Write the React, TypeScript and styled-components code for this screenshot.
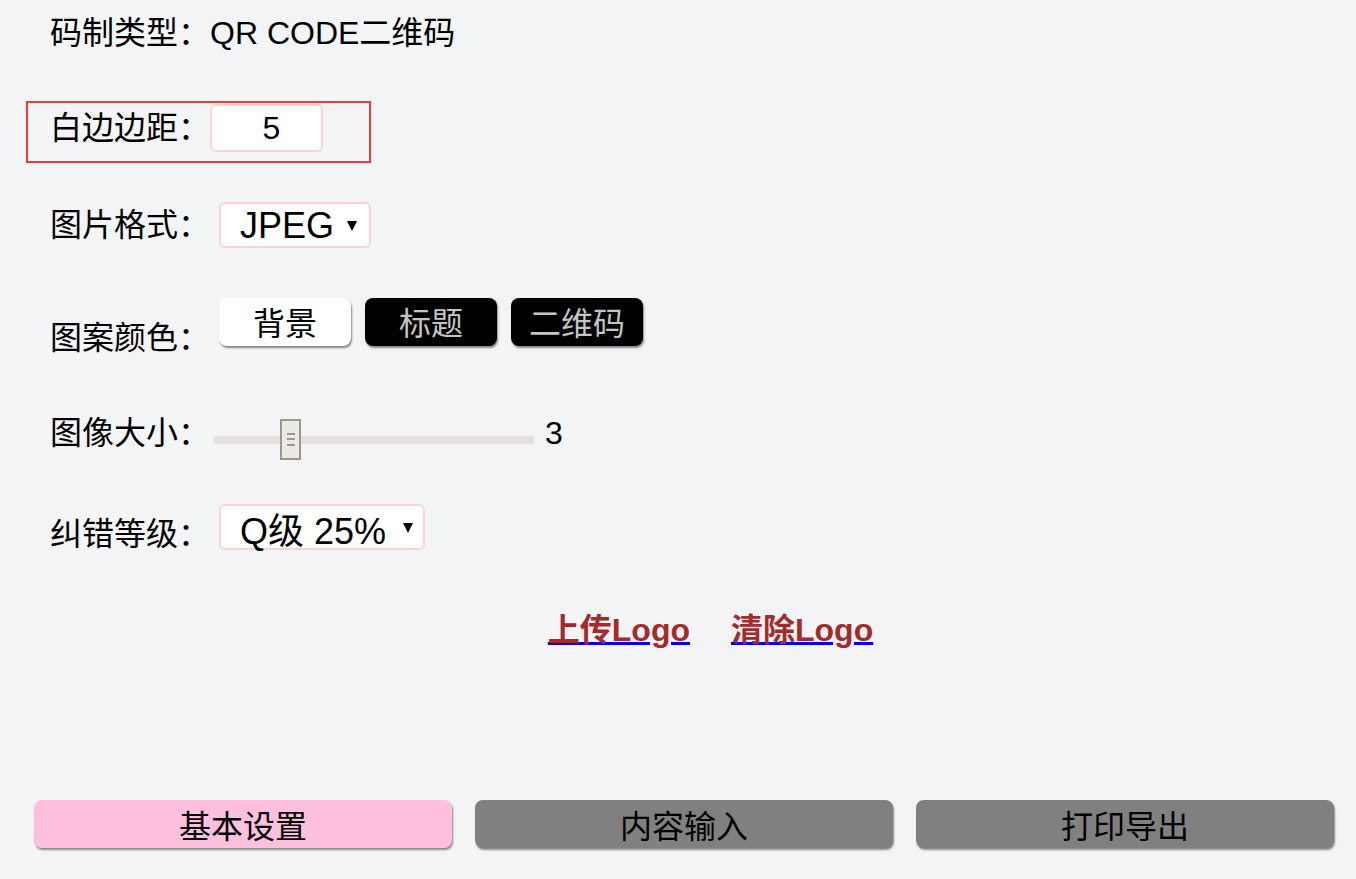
import React from 'react'
import styled, { createGlobalStyle } from 'styled-components'

const GlobalStyle = createGlobalStyle`
  body {
    margin: 0;
    background: #f3f4f6;
    font-family: 'Liberation Sans', 'Noto Sans CJK SC', sans-serif;
    color: #000;
  }
`

const Page = styled.div`
  min-height: 100vh;
  display: flex;
  flex-direction: column;
`

const Form = styled.div`
  display: flex;
  flex-direction: column;
  align-items: flex-start;
  padding-left: 26px;
`

const Row = styled.div<{ $mt: number; $h: number; $hl?: boolean }>`
  display: flex;
  align-items: flex-start;
  box-sizing: border-box;
  margin-top: ${(p) => p.$mt}px;
  height: ${(p) => p.$h}px;
  padding: 0 46px 0 22px;
  border: 2px solid ${(p) => (p.$hl ? '#f03a3a' : 'transparent')};
`

const Label = styled.span<{ $mt?: number }>`
  font-size: 32px;
  line-height: 42px;
  white-space: nowrap;
  margin-top: ${(p) => p.$mt ?? 0}px;
`

const NumberInput = styled.input`
  box-sizing: border-box;
  width: 113px;
  height: 48px;
  margin-top: 1px;
  padding: 0 0 0 10px;
  border: 2px solid #ffd2d2;
  border-radius: 6px;
  background: #fff;
  font-family: inherit;
  font-size: 32px;
  text-align: center;
  outline: none;
`

const SelectBox = styled.label<{ $w: number; $pr: number }>`
  box-sizing: border-box;
  display: flex;
  align-items: center;
  width: ${(p) => p.$w}px;
  height: 46px;
  margin-left: 9px;
  padding: 0 ${(p) => p.$pr}px 0 19px;
  border: 2px solid #ffd2d2;
  border-radius: 6px;
  background: #fff;
`

const Select = styled.select<{ $drop?: number }>`
  appearance: none;
  flex: 1;
  min-width: 0;
  border: none;
  background: transparent;
  font-family: inherit;
  font-size: 36px;
  color: #000;
  padding: ${(p) => p.$drop ?? 0}px 0 0;
  outline: none;
`

const Arrow = styled.span`
  width: 0;
  height: 0;
  border-left: 5px solid transparent;
  border-right: 5px solid transparent;
  border-top: 10px solid #000;
  margin-top: 2px;
`

const Swatches = styled.div`
  display: flex;
  gap: 14px;
  margin-left: 9px;
`

const Swatch = styled.button<{ $dark?: boolean }>`
  box-sizing: border-box;
  width: 132px;
  height: 48px;
  border: none;
  border-radius: 8px;
  background: ${(p) => (p.$dark ? '#000' : '#fff')};
  color: ${(p) => (p.$dark ? '#c4c4c4' : '#000')};
  font-family: inherit;
  font-size: 32px;
  line-height: 44px;
  padding: 4px 0 0;
  box-shadow: 1px 2px 2px rgba(0, 0, 0, 0.45);
  cursor: pointer;
`

const Range = styled.input`
  appearance: none;
  width: 320px;
  height: 41px;
  margin: 7px 0 0 4px;
  background: transparent;

  &::-webkit-slider-runnable-track {
    height: 8px;
    background: #e3dfda;
  }

  &::-webkit-slider-thumb {
    appearance: none;
    box-sizing: border-box;
    width: 21px;
    height: 41px;
    margin-top: -16.5px;
    border: 2px solid #9d968f;
    background:
      linear-gradient(#9d968f, #9d968f) 5px 12px / 8px 2px no-repeat,
      linear-gradient(#9d968f, #9d968f) 5px 17px / 8px 2px no-repeat,
      linear-gradient(#9d968f, #9d968f) 5px 23px / 8px 2px no-repeat,
      #ece9e5;
  }
`

const RangeValue = styled.span`
  font-size: 32px;
  line-height: 42px;
  margin-left: 11px;
`

const LinkBar = styled.div`
  display: flex;
  justify-content: center;
  gap: 41px;
  margin-top: 52px;
  padding-left: 65px;
`

const LogoLink = styled.a`
  color: #0000ee;
  text-decoration: underline;
  text-decoration-thickness: 3px;
  text-underline-offset: 1px;
  font-size: 32px;
  line-height: 42px;
  font-weight: bold;
  cursor: pointer;
`

const LinkText = styled.span`
  color: #a52a2a;
`

const Nav = styled.div`
  margin-top: auto;
  display: grid;
  grid-template-columns: repeat(3, 1fr);
  gap: 23px;
  padding: 0 22px 31px 34px;
`

const Tab = styled.button<{ $active?: boolean }>`
  height: 48px;
  border: none;
  border-radius: 8px;
  background: ${(p) => (p.$active ? '#ffc0e0' : '#808080')};
  color: #000;
  font-family: inherit;
  font-size: 32px;
  box-shadow: 1px 2px 2px rgba(0, 0, 0, 0.45);
  cursor: pointer;
`

export default function App() {
  return (
    <Page>
      <GlobalStyle />
      <Form>
        <Row $mt={10} $h={46}>
          <Label>码制类型：QR CODE二维码</Label>
        </Row>
        <Row $mt={45} $h={62} $hl>
          <Label $mt={4}>白边边距：</Label>
          <NumberInput type="text" defaultValue="5" />
        </Row>
        <Row $mt={37} $h={50}>
          <Label $mt={2}>图片格式：</Label>
          <SelectBox $w={152} $pr={12}>
            <Select defaultValue="JPEG">
              <option>JPEG</option>
              <option>PNG</option>
            </Select>
            <Arrow />
          </SelectBox>
        </Row>
        <Row $mt={46} $h={65}>
          <Label $mt={19}>图案颜色：</Label>
          <Swatches>
            <Swatch>背景</Swatch>
            <Swatch $dark>标题</Swatch>
            <Swatch $dark>二维码</Swatch>
          </Swatches>
        </Row>
        <Row $mt={49} $h={52}>
          <Label>图像大小：</Label>
          <Range type="range" min={1} max={10} defaultValue={3} />
          <RangeValue>3</RangeValue>
        </Row>
        <Row $mt={40} $h={55}>
          <Label $mt={9}>纠错等级：</Label>
          <SelectBox $w={206} $pr={10}>
            <Select defaultValue="Q" $drop={8}>
              <option value="L">L级 7%</option>
              <option value="M">M级 15%</option>
              <option value="Q">Q级 25%</option>
              <option value="H">H级 30%</option>
            </Select>
            <Arrow />
          </SelectBox>
        </Row>
      </Form>
      <LinkBar>
        <LogoLink>
          <LinkText>上传Logo</LinkText>
        </LogoLink>
        <LogoLink>
          <LinkText>清除Logo</LinkText>
        </LogoLink>
      </LinkBar>
      <Nav>
        <Tab $active>基本设置</Tab>
        <Tab>内容输入</Tab>
        <Tab>打印导出</Tab>
      </Nav>
    </Page>
  )
}
